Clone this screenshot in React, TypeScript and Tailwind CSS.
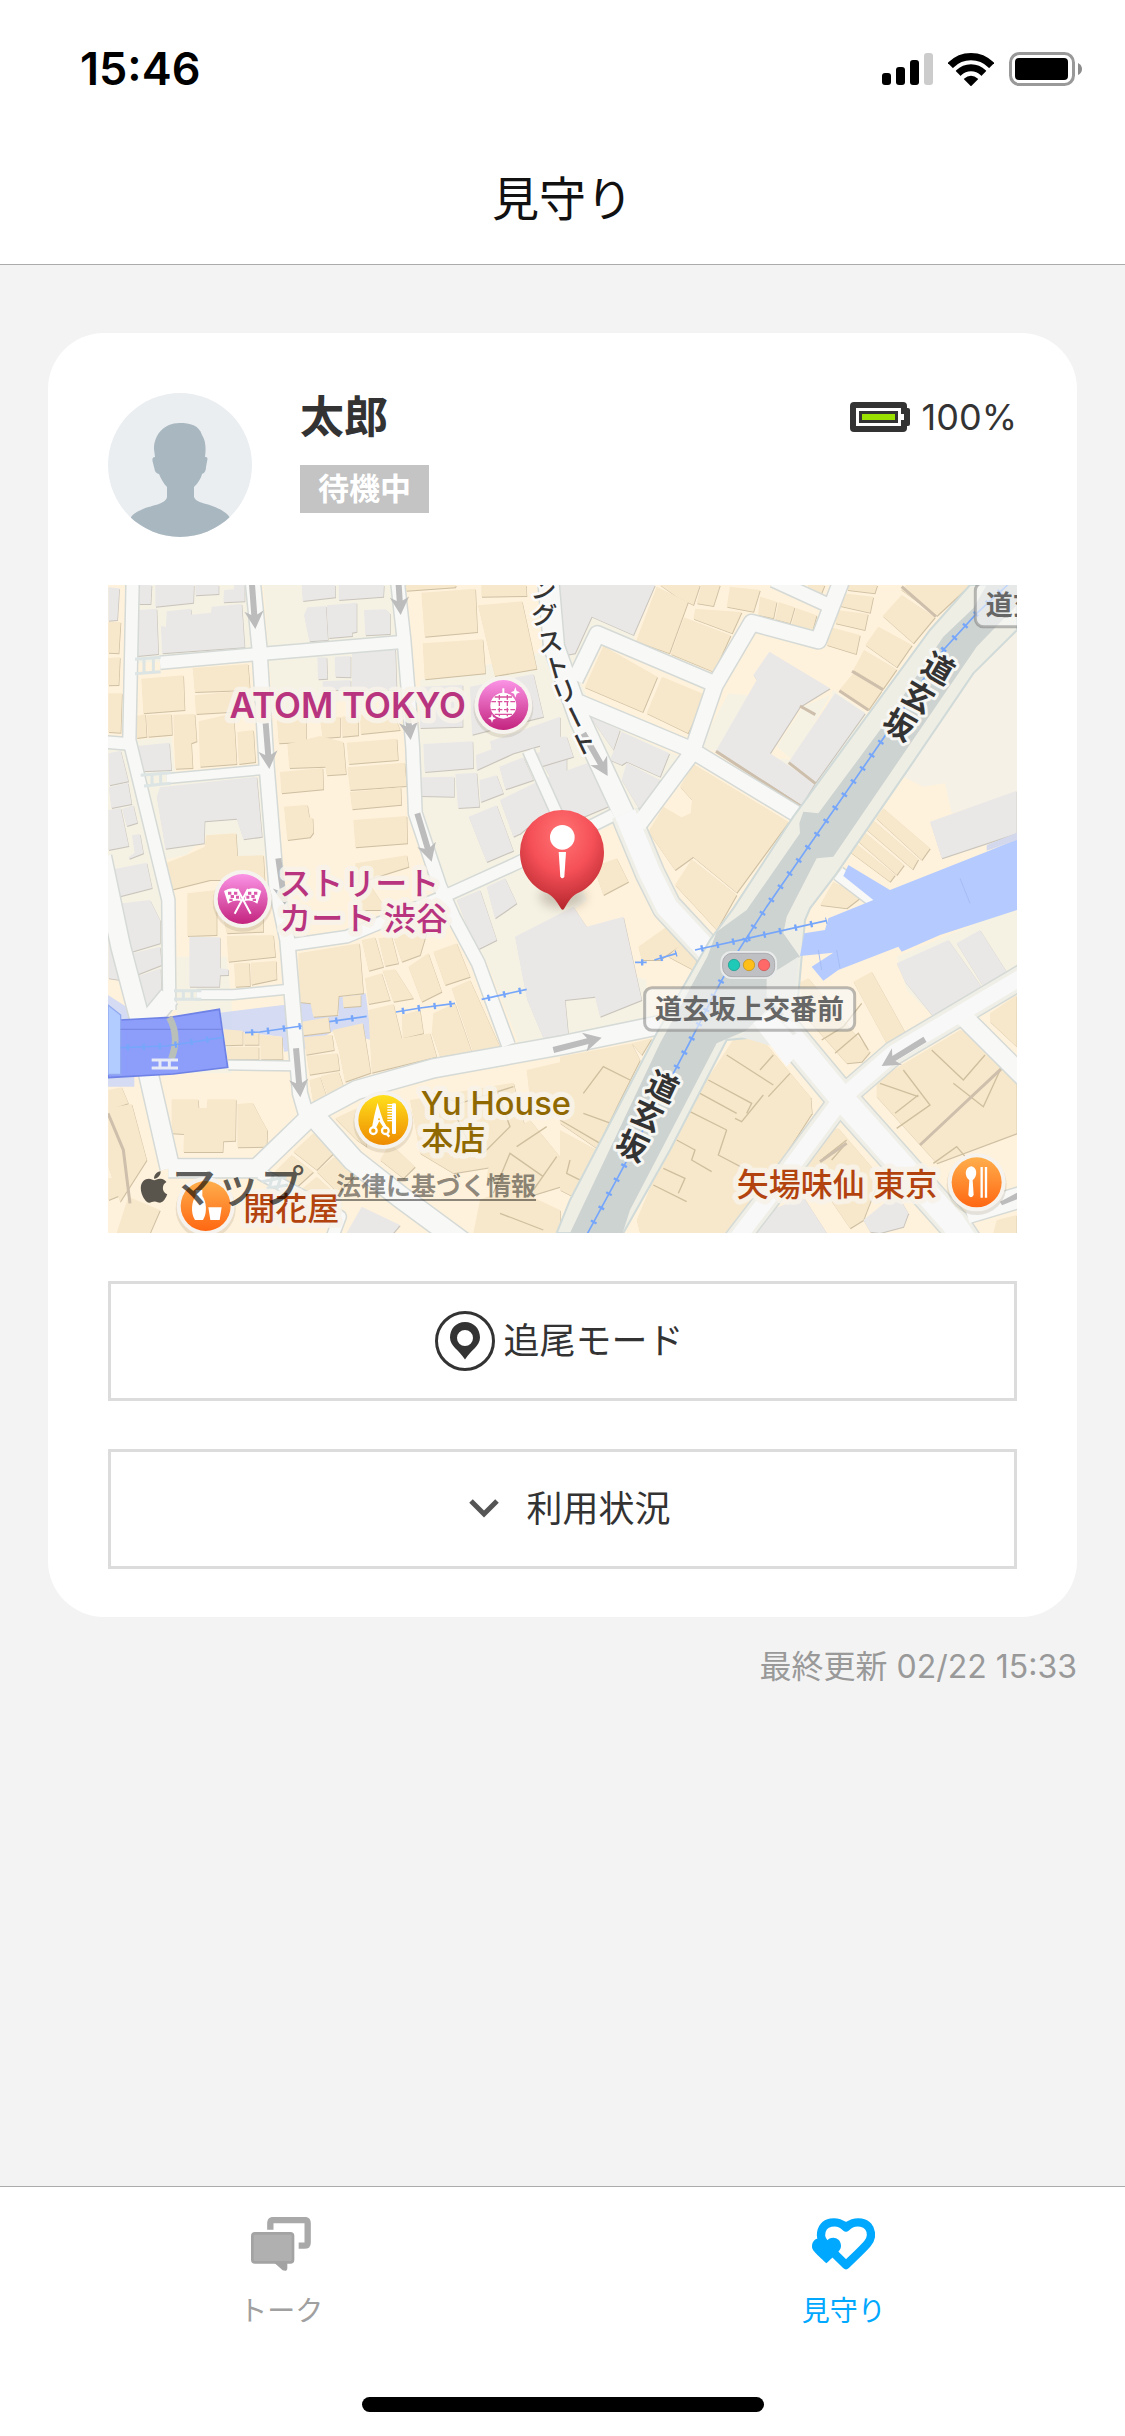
import { useState } from "react";
import { FaApple } from "react-icons/fa";

/* ---------- Map data: polygons are grouped by map tile ---------- */

type Tile = { x: number; y: number; tan: string[]; gray: string[] };

const tiles: Tile[] = [
  {
    x: 0,
    y: 0,
    gray: [
      "25,22 58,25 52,120 25,122",
      "118,15 155,15 152,72 116,72",
      "166,15 282,15 280,68 166,80",
      "286,15 356,15 356,42 286,46",
      "372,30 402,28 402,15 434,15 434,64 370,67",
      "116,90 170,86 175,222 112,228",
      "183,138 198,140 200,94 272,86 275,104 333,98 335,80 425,72 434,202 186,220",
      "605,15 706,15 706,52 608,63",
      "716,15 852,15 850,50 716,60",
      "612,105 622,82 678,78 684,180 628,184",
      "680,76 770,68 770,155 756,158 757,168 686,174",
      "792,90 856,88 870,100 870,162 796,166",
      "652,232 680,232 682,296 654,298",
      "704,230 752,228 752,292 706,290",
      "756,220 886,206 890,330 756,330",
      "668,304 752,300 752,330 668,330",
      "964,320 1088,314 1088,440 960,444",
      "1110,320 1300,282 1330,410 1116,464",
      "970,492 1118,484 1120,564 974,576",
      "1170,484 1380,410 1380,480 1240,520 1130,570 1128,525 1175,508",
      "966,592 1062,590 1062,650 962,648",
      "1066,582 1130,578 1138,680 1074,684",
      "1138,600 1190,586 1210,640 1142,666",
      "1198,560 1270,532 1300,600 1216,628",
      "1106,710 1190,676 1240,812 1160,846",
      "1200,660 1310,606 1345,690 1262,760 1240,770",
      "1310,520 1400,480 1400,585 1350,590",
      "110,498 208,488 214,570 126,574",
      "170,650 180,622 470,590 486,770 430,778 410,716 314,724 312,790 196,806",
      "25,520 62,512 85,604 28,616",
      "26,622 84,608 95,672 34,684",
      "66,686 100,676 112,728 80,738",
      "25,690 62,684 86,798 25,810",
      "85,832 104,818 96,766 120,762 130,820 88,836",
      "40,868 140,848 156,924 54,950",
      "1070,960 1140,930 1190,1080 1130,1110",
      "1160,920 1215,895 1250,970 1185,1015",
    ],
    tan: [
      "25,126 62,126 56,220 25,218",
      "25,234 60,232 56,315 25,316",
      "25,340 66,340 62,458 25,456",
      "124,296 250,286 254,390 130,400",
      "278,264 444,252 450,330 284,336",
      "284,346 450,330 452,392 288,402",
      "110,408 136,402 140,470 110,474",
      "140,406 214,402 216,464 144,470",
      "220,404 284,402 290,484 274,490 278,564 226,566 222,480",
      "296,424 400,400 404,452 410,552 300,560",
      "412,456 460,450 466,546 416,552",
      "918,15 1068,15 1066,22 918,32",
      "964,38 1126,26 1132,156 974,170",
      "968,190 1148,178 1156,280 974,298",
      "1144,15 1278,15 1280,48 1144,50",
      "1134,76 1266,64 1310,266 1184,288",
      "530,410 618,400 618,486 536,490",
      "660,420 720,410 720,470 668,474",
      "724,410 775,405 775,466 726,470",
      "780,405 880,395 900,450 782,462",
      "562,492 660,468 730,486 738,582 680,586 676,560 568,564",
      "740,488 890,476 894,540 746,552",
      "540,576 668,564 670,628 544,640",
      "742,562 914,548 920,618 750,630",
      "750,636 902,622 904,674 756,688",
      "552,680 622,674 628,712 638,714 640,758 630,772 562,780",
      "760,720 920,708 922,790 766,802",
      "766,850 920,826 926,860 800,900 860,990 766,990",
      "196,850 262,824 314,800 318,766 408,760 412,828 490,826 494,900 330,900 210,930",
    ],
  },
  {
    x: 1380,
    y: 0,
    gray: [
      "0,15 285,15 220,165 95,110 45,220 0,228",
      "628,215 810,325 720,380 630,520 765,610 725,675 468,512 590,300 580,285",
      "825,340 915,400 765,610 685,548",
      "90,410 180,450 160,510",
      "185,455 328,520 300,590 200,545 185,555 150,540",
      "200,548 300,600 245,700 185,600",
      "-60,470 20,470 40,530 -60,560",
      "-60,600 85,548 155,675 0,740 -60,740",
      "1110,725 1370,632 1370,760 1145,835",
    ],
    tan: [
      "290,20 384,66 328,220 228,184",
      "300,15 420,15 400,75 350,50",
      "424,15 480,15 460,78 410,70",
      "510,20 600,30 580,95 500,80",
      "600,50 650,65 640,115 594,105",
      "656,66 704,82 690,130 645,118",
      "708,84 770,106 755,160 694,136",
      "744,15 794,15 780,50 744,40",
      "406,86 545,96 516,160 400,116",
      "372,112 512,166 462,276 332,222",
      "130,198 292,290 248,396 74,322",
      "306,290 438,345 384,460 260,400",
      "862,15 952,15 944,40 862,30",
      "850,40 940,50 930,98 840,78",
      "830,90 924,102 914,150 826,130",
      "806,140 900,165 888,222 800,195",
      "955,140 1056,195 1010,262 916,195",
      "912,210 1010,268 970,325 880,270",
      "880,280 965,332 925,390 838,330",
      "1025,45 1125,112 1060,190 968,108",
      "1040,15 1230,15 1130,108 1022,28",
      "400,552 686,726 530,938 392,825 300,740 392,700 396,660 360,620",
      "310,680 545,818 495,905 400,830 345,870 265,755",
      "395,838 530,944 470,1050 410,985 345,915",
      "100,860 170,835 205,905 130,945",
      "970,685 1110,805 1085,840 948,715",
      "942,722 1075,838 1058,868 918,748",
      "912,755 1032,855 1010,885 890,780",
      "885,788 1005,885 990,905 865,812",
      "820,905 905,950 860,985 780,975",
    ],
  },
  {
    x: 0,
    y: 960,
    gray: [
      "66,10 150,0 180,60 180,130 95,155",
      "97,160 180,140 185,195 108,225",
      "108,230 182,205 185,310 140,322",
      "268,110 360,112 360,205 385,208 385,225 360,226 358,260 268,260",
      "25,80 60,240 25,235",
      "1245,110 1420,20 1460,80 1570,50 1625,300 1500,350 1485,290 1395,300 1405,405 1330,415 1280,295",
      "785,920 900,975 880,999 740,999",
    ],
    tan: [
      "262,-20 350,-30 350,105 262,108",
      "360,10 490,15 490,95 380,100",
      "380,108 520,105 526,170 385,185",
      "402,190 448,188 450,258 406,260",
      "452,188 528,182 530,238 454,254",
      "595,160 778,130 790,280 716,288 712,345 640,350 632,310 596,306",
      "728,290 782,284 782,318 730,322",
      "785,120 825,112 850,200 806,212",
      "835,115 875,110 895,190 855,198",
      "880,110 985,80 960,165 905,185",
      "795,235 845,220 870,300 805,312",
      "848,212 885,208 940,295 880,305",
      "925,200 985,160 1025,275 965,305",
      "1000,155 1070,130 1110,230 1035,255",
      "1055,265 1110,240 1200,440 1120,458",
      "1000,340 1065,310 1115,455 1020,470 995,400",
      "805,330 880,312 905,415 990,400 1010,470 815,518",
      "905,345 960,330 970,400 908,415",
      "372,388 428,392 428,434 374,436",
      "432,400 476,398 476,434 432,434",
      "380,440 476,440 476,478 382,478",
      "480,404 546,410 548,478 482,478",
      "606,365 685,352 690,396 610,406",
      "612,412 696,404 702,450 618,464",
      "620,468 712,460 718,510 628,524",
      "698,390 788,370 812,518 735,545 716,450",
      "628,540 660,530 680,590 640,612",
      "662,528 716,515 732,565 685,592",
      "215,598 294,598 296,624 320,624 322,598 408,598 406,722 370,724 368,756 250,756 252,702 215,700",
      "412,612 458,608 482,655 502,690 500,740 412,742",
      "640,700 705,755 650,810 580,755",
      "710,765 770,820 715,880 650,815",
      "575,765 640,815 580,870 520,820",
      "650,830 710,885 680,945 590,880",
      "25,570 65,562 85,610 25,630",
      "25,625 95,612 140,780 60,905 25,800",
      "25,835 60,830 75,880 25,900",
      "85,890 180,930 150,999 50,999",
      "705,655 780,620 800,740 770,720",
      "930,600 1240,548 1275,680 1180,800 1060,820 960,760",
      "1180,730 1290,660 1380,770 1380,860 1250,900 1160,830",
      "1280,510 1385,485 1385,650 1290,600",
      "1140,900 1230,860 1380,930 1380,999 1120,999",
      "870,730 945,800 910,835 840,780",
    ],
  },
  {
    x: 1380,
    y: 960,
    gray: [
      "1010,190 1165,120 1265,260 1120,350 1035,245",
      "1190,130 1260,90 1340,215 1270,260",
      "610,940 730,890 800,999 560,999",
      "910,960 1010,880 1045,940 1030,980 960,999 930,995",
    ],
    tan: [
      "235,140 320,80 370,130 300,180 245,180",
      "375,118 418,160 400,210 325,170",
      "215,430 275,415 245,465",
      "0,470 215,430 240,480 175,610 110,745 0,670",
      "0,690 120,755 40,890 0,870",
      "520,418 605,416 752,592 756,640 620,850 500,999 240,999 230,960 330,720 440,540",
      "880,245 935,215 1040,405 985,440",
      "715,250 745,235 930,455 905,485 860,490 745,360",
      "950,540 1200,390 1240,400 1370,540 1370,700 1130,790 950,590",
      "1290,340 1370,285 1370,440 1290,365",
      "800,690 835,685 960,830 910,960 870,985 730,780",
      "1310,960 1370,945 1370,999 1300,999",
    ],
  },
];

// Party walls and roof edges inside the larger blocks.
const walls = [
  "M1880 1425 L2020 1515 M1825 1500 L1955 1570 L1940 1600 M1800 1540 L1910 1600 M1770 1595 L1880 1650",
  "M2020 1425 L1980 1470 M2070 1480 L2005 1550 M1990 1545 L1925 1625 L1905 1615 M1880 1650 L1855 1725 L1960 1780",
  "M1730 1680 L1785 1710 L1775 1740 L1835 1775 M1690 1765 L1755 1795 L1735 1840 M1660 1815 L1760 1865",
  "M2410 1470 L2490 1575 L2390 1645 M2495 1410 L2590 1500 L2655 1425 M2340 1510 L2455 1550 M2385 1600 L2455 1545",
  "M2500 1750 L2570 1700 L2600 1735 M2560 1510 L2650 1580 L2705 1460",
  "M2165 1380 L2230 1340 L2285 1270 M2205 1420 L2275 1360 L2305 1410",
  "M1380 1620 L1500 1690 M1450 1600 L1560 1640 M1410 1740 L1400 1780 L1460 1810 M1450 1540 L1510 1460 L1590 1500",
  "M1000 1540 L1080 1570 L1240 1520 M1060 1590 L1120 1720 M1190 1530 L1230 1640 L1150 1720",
  "M1180 1840 L1230 1720 L1330 1790 M1250 1700 L1340 1640 M1300 1830 L1370 1730 M1200 1900 L1330 1950",
  "M2195 1740 L2230 1700 M2170 1735 L2240 1680 M2270 1780 L2170 1850",
];

const roads: { d: string; w: number }[] = [
  { d: "M98 0 L88 480 L205 960 L208 1290", w: 36 },
  { d: "M0 485 L90 492", w: 34 },
  { d: "M5 830 L62 1100 L120 1320 L145 1480 L210 1765", w: 56 },
  { d: "M208 1250 L150 1320", w: 60 },
  { d: "M205 1765 L470 1765 L630 1610", w: 54 },
  { d: "M480 1780 L720 1910 L690 1990", w: 34 },
  { d: "M458 0 L478 200 L500 560 L530 930 L562 1080 L580 1300 L600 1540 L620 1610", w: 42 },
  { d: "M635 1600 L760 1740 L900 1850 L1090 1990", w: 62 },
  { d: "M892 0 L912 180 L938 500 L946 700 L1020 920 L1060 1010 L1135 1150 L1225 1395", w: 38 },
  { d: "M180 248 L480 222 L905 186", w: 36 },
  { d: "M200 596 L500 568", w: 26 },
  { d: "M290 1244 L400 1244 L560 1228", w: 26 },
  { d: "M560 1096 L740 1070 L1030 950 L1250 850 L1540 705", w: 34 },
  { d: "M385 1455 L590 1458", w: 26 },
  { d: "M630 1605 L770 1530 L1000 1465 L1390 1395 L1680 1335", w: 54 },
  { d: "M1285 512 L1370 700", w: 32 },
  { d: "M1345 0 L1362 200 L1440 420 L1580 720", w: 60 },
  { d: "M1575 700 L1650 880 L1700 980 L1830 1120", w: 84 },
  { d: "M1425 300 L1492 162 L1845 312", w: 46 },
  { d: "M1430 365 L1765 505 L2095 705", w: 46 },
  { d: "M1615 735 L1775 520 L1845 315 L1955 128 L2155 182 L2225 0", w: 46 },
  { d: "M2020 0 L2190 78", w: 40 },
  { d: "M2215 880 L2320 960", w: 40 },
  { d: "M1980 1260 L2230 1560 L2560 1930 L2600 1990", w: 92 },
  { d: "M2800 1170 L2380 1420 L2230 1550 L2000 1860 L1900 1990", w: 68 },
  { d: "M2590 1310 L2800 1520", w: 54 },
  { d: "M2600 1900 L2800 1840", w: 60 },
];

const arrows: [number, number, number, number][] = [
  [455, 0, 466, 147],
  [895, 0, 902, 105],
  [497, 430, 508, 567],
  [920, 380, 932, 480],
  [952, 700, 995, 845],
  [535, 835, 555, 975],
  [588, 1405, 601, 1552],
  [1450, 460, 1523, 588],
  [1360, 1410, 1505, 1373],
  [2475, 1378, 2345, 1458],
];

const railways = [
  "M2750 -10 L2630 100 L2530 210 L2340 490 L2000 980 L1910 1120 L1860 1210 L1765 1395 L1720 1480 L1560 1780 L1460 1965",
  "M62 1403 L200 1398 L368 1372",
  "M435 1358 L480 1356 L605 1338",
  "M688 1325 L800 1309",
  "M888 1296 L960 1284 L1065 1270",
  "M1145 1258 L1280 1228",
  "M1605 1147 L1640 1147 M1663 1140 L1730 1120",
  "M1785 1110 L1930 1078 L2180 1022",
];

const slopeChars: [string, number, number, number][] = [
  ["道", 2515, 265, 30],
  ["玄", 2455, 350, 30],
  ["坂", 2398, 435, 30],
  ["道", 1688, 1520, 25],
  ["玄", 1642, 1606, 25],
  ["坂", 1596, 1698, 25],
];

const streetChars: [string, number, number, number][] = [
  ["ン", 1330, 28, 5],
  ["グ", 1332, 105, 5],
  ["ス", 1350, 185, -8],
  ["ト", 1370, 262, -16],
  ["リ", 1394, 335, -22],
  ["ー", 1423, 412, 64],
  ["ト", 1450, 490, -26],
];

function Arrow({ from }: { from: [number, number, number, number] }) {
  const [x1, y1, x2, y2] = from;
  const len = Math.hypot(x2 - x1, y2 - y1);
  const angle = (Math.atan2(y2 - y1, x2 - x1) * 180) / Math.PI;
  return (
    <path
      transform={`translate(${x1} ${y1}) rotate(${angle})`}
      d={`M0 -9 H${len - 43} L${len - 54} -29 L${len} 0 L${len - 54} 29 L${len - 43} 9 H0 Z`}
    />
  );
}

function Poi({ x, y, fill, children }: { x: number; y: number; fill: string; children: React.ReactNode }) {
  return (
    <g transform={`translate(${x} ${y})`}>
      <circle cy="8" r="90" fill="#8a7a60" opacity=".18" />
      <circle r="87" fill="#f6f3ee" />
      <circle r="75" fill={fill} />
      {children}
    </g>
  );
}

function MapDrawing() {
  return (
    <svg viewBox="24 15 2727 1944" className="block h-auto w-full" role="img" aria-label="渋谷 道玄坂周辺の地図">
      <defs>
        <linearGradient id="pink" x1="0" y1="0" x2="0" y2="1">
          <stop offset="0" stopColor="#fb94e6" />
          <stop offset="1" stopColor="#c3237e" />
        </linearGradient>
        <linearGradient id="yellow" x1="0" y1="0" x2="0" y2="1">
          <stop offset="0" stopColor="#ffe01c" />
          <stop offset="1" stopColor="#ee8a00" />
        </linearGradient>
        <linearGradient id="orange" x1="0" y1="0" x2="0" y2="1">
          <stop offset="0" stopColor="#ffae4c" />
          <stop offset="1" stopColor="#ff6712" />
        </linearGradient>
        <radialGradient id="pin" cx=".5" cy=".25" r=".75">
          <stop offset="0" stopColor="#ff7474" />
          <stop offset=".5" stopColor="#f55058" />
          <stop offset="1" stopColor="#b5262d" />
        </radialGradient>
        <filter id="soft" x="-50%" y="-50%" width="200%" height="200%">
          <feGaussianBlur stdDeviation="16" />
        </filter>
      </defs>

      <rect x="24" y="15" width="2727" height="1944" fill="#fff2dc" />
      <g fill="#f5f2e4">
        <path d="M98 15 H440 L470 225 L110 250 Z M490 15 H890 L915 330 L520 400 Z M110 480 L215 470 L225 575 L480 590 L495 830 L410 830 L408 760 L318 766 L260 824 L190 840 Z" />
        <path d="M24 490 L90 500 L220 1000 L215 1300 L140 1330 L24 900 Z M960 300 L1400 200 L1600 700 L1300 860 L1040 920 L950 690 Z M1150 1120 L1270 1080 L1640 1200 L1640 1320 L1260 1400 Z M1050 950 L1250 860 L1420 850 L1460 960 L1280 1100 L1140 1150 Z" />
        <path d="M230 1130 H380 L395 1260 V1480 L230 1480 Z M1380 15 H1665 L1600 180 L1480 140 L1400 300 Z M1450 400 L1740 530 L1620 720 L1560 660 Z M1885 340 L1980 350 L1850 515 L1800 500 Z" />
        <path d="M2030 500 L2110 380 L2200 340 L2090 550 Z M1880 520 L2110 680 L2300 400 L2200 330 L2080 540 Z" />
        <path d="M2390 1130 L2700 1000 L2751 990 V1170 L2500 1310 L2420 1230 Z" />
      </g>
      <path d="M2751 140 L2620 280 L2410 590 L2470 620 L2535 610 L2555 700 L2751 640 Z" fill="#f5f1e6" />
      <path
        d="M24 1245 L103 1296 V1520 H24 Z M360 1298 L632 1265 L640 1308 L716 1305 L712 1252 L797 1240 L815 1380 L700 1352 L610 1410 L552 1415 L545 1370 L370 1350 Z"
        fill="#cdd7f6"
        opacity=".85"
      />

      {tiles.map((t) => (
        <g key={`${t.x}-${t.y}`} transform={`translate(${t.x} ${t.y})`}>
          <g transform="translate(2 3)">
            {t.tan.map((p) => (
              <polygon key={p} points={p} fill="#cfc0a3" />
            ))}
            {t.gray.map((p) => (
              <polygon key={p} points={p} fill="#c9c5bd" />
            ))}
          </g>
          {t.tan.map((p) => (
            <polygon key={p} points={p} fill="#f7e8cb" />
          ))}
          {t.gray.map((p) => (
            <polygon key={p} points={p} fill="#eae8e7" />
          ))}
        </g>
      ))}
      <g fill="none" stroke="#cfbf9f" strokeWidth="4">
        {walls.map((d) => (
          <path key={d} d={d} />
        ))}
      </g>
      <path
        d="M2460 1695 L2705 1465 M1848 514 L2104 680 M2066 548 L2146 610 M2100 378 L2146 404 M2218 332 L2305 390 M2256 274 L2350 330 M2405 20 L2508 110 M24 1600 L70 1710 L90 1870 M2160 1745 L2240 1690"
        fill="none"
        stroke="#cdbfab"
        strokeWidth="9"
      />

      <g fill="none" strokeLinejoin="round">
        {roads.map((r) => (
          <path key={r.d} d={r.d} stroke="#d5dad6" strokeWidth={r.w + 9} />
        ))}
        {roads.map((r) => (
          <path key={r.d} d={r.d} stroke={r.w > 66 ? "#efefe7" : "#f8f8f7"} strokeWidth={r.w} />
        ))}
        {roads
          .filter((r) => r.w > 66)
          .map((r) => (
            <path key={r.d} d={r.d} stroke="#f8f8f8" strokeWidth={r.w - 20} />
          ))}
      </g>

      {/* Pedestrian crossings */}
      <g stroke="#dce4e4" strokeWidth="9" fill="none">
        <path d="M105 238 L182 232 M105 281 L182 275 M132 238 V278 M160 236 V276" />
        <path d="M122 586 L212 578 M132 618 L212 610 M156 584 V614 M182 582 V612" />
        <path d="M222 1232 H304 M222 1258 H304 M250 1232 V1258 M276 1232 V1258" />
        <path d="M485 1805 L560 1790 M500 1825 L565 1815 M520 1785 L505 1830 M545 1785 L530 1830" />
      </g>

      {/* Dogenzaka: side walks, carriageway and crossing */}
      <path
        d="M2610 15 L2490 150 L2080 710 L1900 985 L1830 1080 L1670 1360 L1410 1860 L1370 1959 H1570 L1710 1710 L1880 1380 L1985 1370 L2090 1300 L2115 1020 L2130 985 L2210 880 L2430 560 L2620 280 L2751 150 V15 Z"
        fill="#eeeee5"
        stroke="#d0dad8"
        strokeWidth="6"
      />
      <path
        d="M2660 15 L2620 85 L2530 170 L2340 450 L2155 700 L2110 695 L2098 730 L2100 760 L1940 990 L1850 1055 L1822 1130 L1680 1390 L1410 1959 H1568 L1590 1890 L1710 1660 L1850 1390 L1990 1330 L2085 1290 L2005 1190 L2100 1130 L2050 1060 L2060 1010 L2150 835 L2200 830 L2630 200 L2751 75 V15 Z"
        fill="#cdd3d1"
      />
      <path d="M2000 1190 L2095 1130 L2080 1330 L2000 1250 Z M1920 1370 L2000 1290 L2090 1360 L2020 1400 Z" fill="#ebece7" />
      <path d="M1960 1330 L2010 1290 L2110 1400 L2060 1460 Z" fill="#f8f8f8" />

      {/* Water and railway station */}
      <path
        d="M2245 855 L2370 930 L2660 815 L2751 778 V990 L2520 1065 L2405 1115 L2395 1100 L2215 1170 L2170 1202 L2135 1160 L2200 1118 L2100 1128 L2113 1060 L2175 1050 L2185 1015 L2320 960 L2230 888 Z"
        fill="#b5cbff"
      />
      <path d="M2660 795 L2751 758 V780 L2660 812 Z" fill="#d3d8ec" />
      <path d="M2580 895 L2610 970 M2155 1110 L2165 1170 M2210 1110 L2220 1165" stroke="#a5bcf5" strokeWidth="3" fill="none" />
      <path d="M60 1320 L210 1312 L358 1288 L383 1462 L220 1482 L24 1493 V1320 Z" fill="#8d9dfa" stroke="#6f82e6" strokeWidth="5" />
      <path d="M24 1275 L62 1305 V1483 H24 Z" fill="#b3ccff" stroke="#91a9f0" strokeWidth="4" />
      <path d="M62 1348 H365" stroke="#7888e4" strokeWidth="4" />
      <path d="M208 1312 Q240 1370 214 1436" stroke="#b9c0ba" strokeWidth="20" fill="none" />
      <path d="M155 1440 H234 M155 1464 H234 M180 1440 V1464 M208 1440 V1464" stroke="#e5eaf6" strokeWidth="9" />

      <g fill="none" stroke="#76a6fa">
        {railways.map((d) => (
          <g key={d}>
            <path d={d} strokeWidth="5" />
            <path d={d} strokeWidth="19" strokeDasharray="7 41" strokeDashoffset="-18" />
          </g>
        ))}
      </g>

      <g fill="#bcbcbc">
        {arrows.map((a) => (
          <Arrow key={a.join()} from={a} />
        ))}
        <path d="M2700 1865 L2751 1838 V1858 L2706 1876 Z" />
      </g>

      {/* Street names */}
      <g
        className="font-medium"
        fontSize="76"
        fill="#333"
        stroke="#fafafa"
        strokeWidth="16"
        strokeLinejoin="round"
        paintOrder="stroke"
        textAnchor="middle"
      >
        {streetChars.map(([c, x, y, r]) => (
          <text key={y} transform={`translate(${x} ${y}) rotate(${r})`} y="28">
            {c}
          </text>
        ))}
      </g>
      <g
        className="font-bold"
        fontSize="93"
        fill="#333"
        stroke="#f6f6f3"
        strokeWidth="18"
        strokeLinejoin="round"
        paintOrder="stroke"
        textAnchor="middle"
      >
        {slopeChars.map(([c, x, y, r]) => (
          <text key={`${x}`} transform={`translate(${x} ${y}) rotate(${r})`} y="34">
            {c}
          </text>
        ))}
      </g>

      {/* Intersection signs */}
      <g fill="#f8f8f8" fillOpacity=".6" stroke="#777" strokeOpacity=".5" strokeWidth="9">
        <rect x="1634" y="1223" width="630" height="128" rx="22" />
        <rect x="2626" y="8" width="400" height="132" rx="24" />
      </g>
      <g className="font-bold" fontSize="81" fill="#666">
        <text x="1665" y="1316">道玄坂上交番前</text>
        <text x="2657" y="105">道玄坂上</text>
      </g>
      <rect x="1861" y="1113" width="170" height="84" rx="34" fill="#e9ebeb" />
      <rect x="1868" y="1120" width="156" height="70" rx="28" fill="#bfc0c4" stroke="#acadb0" strokeWidth="3" />
      <circle cx="1902" cy="1155" r="17" fill="#1ec9b7" stroke="#13978a" strokeWidth="2" />
      <circle cx="1947" cy="1155" r="17" fill="#ffbf1a" stroke="#c18d0c" strokeWidth="2" />
      <circle cx="1992" cy="1155" r="17" fill="#ff6a69" stroke="#cb4a4a" strokeWidth="2" />

      {/* Places */}
      <g
        stroke="#f7f3ea"
        strokeOpacity=".9"
        strokeWidth="32"
        strokeLinejoin="round"
        paintOrder="stroke"
        className="font-medium"
        fontSize="96"
      >
        <text x="1098" y="413" textAnchor="end" fill="#b8347f" fontSize="105" className="font-semibold">ATOM TOKYO</text>
        <text x="538" y="944" fill="#b8347f">ストリート</text>
        <text x="538" y="1050" fill="#b8347f">カート 渋谷</text>
        <text x="962" y="1605" fill="#906800" fontSize="98">Yu House</text>
        <text x="964" y="1709" fill="#906800">本店</text>
        <text x="1910" y="1848" fill="#b3430e">矢場味仙 東京</text>
        <text x="430" y="1919" fill="#b3430e">開花屋</text>
      </g>

      <Poi x={1210} y={375} fill="url(#pink)">
        <circle r="39" fill="#fff" cy="2" />
        <path d="M0 -50 V-30" stroke="#fff" strokeWidth="6" />
        <g stroke="#d9529f" strokeWidth="4" fill="none">
          <path d="M-36 -10 H36 M-36 14 H36 M-12 -30 V34 M12 -30 V34" strokeDasharray="14 5" />
          <path d="M-26 -24 H26 M-26 28 H26" />
        </g>
        <path d="M36 -54 L40 -42 L50 -38 L40 -34 L36 -22 L32 -34 L22 -38 L32 -42 Z M-34 26 L-31 36 L-22 40 L-31 44 L-34 54 L-37 44 L-46 40 L-37 36 Z" fill="#fff" />
      </Poi>
      <Poi x={428} y={957} fill="url(#pink)">
        <g fill="#fff">
          <path d="M-56 -24 Q-34 -38 -14 -28 L-4 6 Q-26 0 -44 14 Z M56 -24 Q34 -38 14 -28 L4 6 Q26 0 44 14 Z" />
          <path d="M-16 -30 L24 44 M16 -30 L-24 44" stroke="#fff" strokeWidth="6" />
        </g>
        <g fill="#dc58ac">
          <path d="M-44 -22 h10 v9 h-10z M-26 -22 h10 v9 h-10z M-36 -12 h10 v9 h-10z M-40 -1 h10 v7 h-10z M-20 -10 h9 v9 h-9z" />
          <path d="M34 -22 h10 v9 h-10z M16 -22 h10 v9 h-10z M26 -12 h10 v9 h-10z M30 -1 h10 v7 h-10z M11 -10 h9 v9 h-9z" />
        </g>
      </Poi>
      <Poi x={850} y={1620} fill="url(#yellow)">
        <path d="M-17 -52 C-12 -30 -4 -10 0 2 L14 26 L4 28 L-12 4 L-24 28 L-34 22 C-30 0 -24 -30 -17 -52 Z" fill="#fff" />
        <circle cx="-13" cy="-2" r="3" fill="#f5ad0b" />
        <g fill="none" stroke="#fff" strokeWidth="7">
          <circle cx="-30" cy="32" r="10" />
          <circle cx="6" cy="32" r="10" />
          <path d="M10 42 L18 50" />
        </g>
        <rect x="26" y="-50" width="12" height="92" rx="4" fill="#fff" />
        <path d="M12 -46 H28 M12 -38 H28 M12 -30 H28 M12 -22 H28 M12 -14 H28 M12 -6 H28 M12 2 H28" stroke="#fff" strokeWidth="4" />
      </Poi>
      <Poi x={2630} y={1807} fill="url(#orange)">
        <path d="M-16 -48 C-36 -46 -38 -18 -22 -6 L-25 38 Q-17 52 -9 38 L-12 -6 C4 -18 2 -46 -16 -48 Z" fill="#fff" />
        <path d="M15 -46 V46 M28 -46 V46" stroke="#fff" strokeWidth="7" />
      </Poi>
      <Poi x={317} y={1878} fill="url(#orange)">
        <path d="M-30 -48 H-10 V-30 C2 -14 6 20 -8 42 H-32 C-46 20 -42 -14 -30 -30 Z M8 4 H48 L42 42 H14 Z" fill="#fff" />
      </Poi>

      {/* Current position */}
      <ellipse cx="1388" cy="950" rx="70" ry="34" fill="#6b5a4a" opacity=".3" filter="url(#soft)" />
      <path
        d="M1386 690 A126 126 0 0 1 1512 816 C1512 880 1470 925 1432 940 C1412 950 1400 975 1392 987 Q1388 991 1384 987 C1376 975 1362 950 1342 940 C1300 925 1260 880 1260 816 A126 126 0 0 1 1386 690 Z"
        fill="url(#pin)"
      />
      <circle cx="1387" cy="772" r="37" fill="#fff" />
      <path d="M1376 816 H1398 L1393 890 Q1387 900 1381 890 Z" fill="#fff" />
    </svg>
  );
}

/* ---------- Icons ---------- */

function StatusIcons() {
  return (
    <div className="flex items-center gap-[15px]">
      <svg className="h-8 w-[51px]" viewBox="0 0 51 32" aria-hidden="true">
        <rect x="0" y="20" width="9" height="12" rx="3" />
        <rect x="14" y="14" width="9" height="18" rx="3" />
        <rect x="28" y="7" width="9" height="25" rx="3" />
        <rect x="42" y="0" width="9" height="32" rx="3" fill="#ccc" />
      </svg>
      <svg className="h-[33px] w-[46px]" viewBox="264 66 138 99" aria-hidden="true">
        <defs>
          <clipPath id="wedge">
            <path d="M333 166 L262 95 V60 H404 V95 Z" />
          </clipPath>
        </defs>
        <g clipPath="url(#wedge)">
          <circle cx="333" cy="162" r="85" fill="none" stroke="#000" strokeWidth="22" />
          <circle cx="333" cy="162" r="52" fill="none" stroke="#000" strokeWidth="21" />
          <circle cx="333" cy="162" r="28" />
        </g>
      </svg>
      <svg className="h-[34px] w-[73px]" viewBox="0 0 73 34" aria-hidden="true">
        <rect x="1.5" y="1.5" width="63" height="31" rx="9" fill="none" stroke="#999" strokeWidth="3" />
        <rect x="6" y="6" width="53" height="22" rx="4" />
        <path d="M69 11 Q73 13 73 17 Q73 21 69 23 Z" fill="#8c8c8c" />
      </svg>
    </div>
  );
}

function Avatar() {
  return (
    <svg className="size-36 shrink-0 rounded-full" viewBox="0 0 144 144" role="img" aria-label="太郎">
      <rect width="144" height="144" fill="#eaeef1" />
      <path
        d="M71.5 30 C56 30 46 42 46 56 L47 64 C44 64 44 67 45 70 L47 78 C48 80 50 81 51 81 C53 86 56 91 59 94 V104 C58 111 45 112 35 116 C28 119 23 122 22 127 V144 H123 V127 C121 121 114 117 107 114 C98 110 88 110 86 104 V94 C89 91 93 86 94 81 C97 80 98 77 98 74 L99.5 66 C99.5 64 98 64 97 64 C98 56 98 48 94 42 C91 32 82 30 71.5 30 Z"
        fill="#a9b7c0"
      />
    </svg>
  );
}

function BatteryIcon() {
  return (
    <svg className="h-[30px] w-[60px]" viewBox="0 0 60 30" role="img" aria-label="バッテリー">
      <rect width="57" height="30" rx="4" fill="#333" />
      <rect x="50" y="6" width="10" height="18" rx="2" fill="#333" />
      <path d="M6 6 H51 V12 H54 V18 H51 V24 H6 Z" fill="#fff" />
      <rect x="9" y="9" width="39" height="12" fill="#333" />
      <rect x="12" y="12" width="33" height="6" fill="#9be100" />
    </svg>
  );
}

function TalkIcon() {
  return (
    <svg className="h-[54px] w-[60px]" viewBox="63 51 180 162" aria-hidden="true">
      <path d="M121 89 V70 Q121 60 131 60 H223 Q233 60 233 70 V128 Q233 137 223 137 H206" fill="none" stroke="#a9a9a9" strokeWidth="19" />
      <path d="M130 186 L158 211 Q172 216 172 204 V186 Z" fill="#a3a3a3" />
      <rect x="67" y="100" width="122" height="87" rx="8" fill="#b0b0b0" stroke="#a3a3a3" strokeWidth="8" />
    </svg>
  );
}

function HeartIcon() {
  return (
    <svg className="h-[54px] w-[63px]" viewBox="99 51 189 162" aria-hidden="true">
      <path
        d="M201 83 C180 58 126 60 126 106 C126 122 136 132 201 195 C266 132 276 124 276 105 C276 60 222 58 201 83 Z"
        fill="none"
        stroke="#00a8ff"
        strokeWidth="25"
        strokeLinejoin="round"
      />
      <path d="M142 124 C130 108 99 112 99 139 C99 150 105 155 142 190 C178 156 186 150 186 137 C185 112 156 106 142 124 Z" fill="#00a8ff" />
    </svg>
  );
}

function TrackIcon() {
  return (
    <svg className="size-[60px]" viewBox="0 0 60 60" aria-hidden="true">
      <circle cx="30" cy="30" r="28.5" fill="none" stroke="#333" strokeWidth="3" />
      <path
        fillRule="evenodd"
        d="M30 11 C21 11 15 18 15 26.500 C15 35 24 39 30 48.500 C36 39 45 35 45 26.500 C45 18 39 11 30 11 Z M30 19 A8 8 0 1 1 30 35 A8 8 0 1 1 30 19 Z"
        fill="#333"
      />
    </svg>
  );
}

/* ---------- Page ---------- */

export default function App() {
  const [tab, setTab] = useState<"talk" | "watch">("watch");

  return (
    <div lang="ja" className="flex min-h-screen flex-col bg-white font-['Inter','Noto_Sans_CJK_JP',sans-serif] text-[#333]">
      <header className="border-b border-[#ababab] bg-white">
        <div className="flex h-33 items-center justify-between pt-1.5 pr-[43px] pl-20">
          <time className="text-[45px] font-semibold text-black">15:46</time>
          <StatusIcons />
        </div>
        <h1 className="flex h-33 items-center justify-center pt-0.5 text-[47px] text-[#111]">見守り</h1>
      </header>

      <main className="flex-1 bg-[#f3f3f3] px-12 pt-17">
        <section className="rounded-[56px] bg-white px-15 pt-15 pb-12">
          <div className="flex items-start">
            <Avatar />
            <div className="ml-12 flex flex-1 flex-col items-start gap-6">
              <h2 className="text-[44px] leading-12 font-bold">太郎</h2>
              <span className="bg-[#c4c4c4] px-[18px] text-[31px] leading-12 font-bold text-white">待機中</span>
            </div>
            <div className="flex h-12 items-center gap-3 text-4xl">
              <BatteryIcon />
              <span>100%</span>
            </div>
          </div>

          <div className="relative mt-12 overflow-hidden">
            <MapDrawing />
            <div className="absolute bottom-6 left-7 flex items-center gap-8">
              <span className="flex items-center text-[44px] leading-none font-medium text-black/65">
                <FaApple className="size-9" aria-hidden="true" />
                マップ
              </span>
              <a href="#legal" className="text-[25px] font-bold text-black/45 underline underline-offset-4">
                法律に基づく情報
              </a>
            </div>
          </div>

          <button
            type="button"
            className="mt-12 flex h-30 w-full items-center justify-center gap-2 border-3 border-[#dcdcdc] pr-1.5 text-4xl"
          >
            <TrackIcon />
            追尾モード
          </button>
          <button
            type="button"
            aria-expanded="false"
            className="mt-12 flex h-30 w-full items-center justify-center gap-3 border-3 border-[#dcdcdc] text-4xl"
          >
            <svg className="size-[60px]" viewBox="0 0 60 60" aria-hidden="true">
              <path d="M17 22 L30 35 L43 22" fill="none" stroke="#555" strokeWidth="5" />
            </svg>
            利用状況
          </button>
        </section>
        <p className="mt-[26px] text-right text-[32px] leading-12 text-[#999]">最終更新 02/22 15:33</p>
      </main>

      <footer className="border-t border-[#ababab] bg-white pb-6">
        <nav className="grid grid-cols-2 text-[28px] leading-10">
          <button
            type="button"
            aria-current={tab === "talk" ? "page" : undefined}
            onClick={() => setTab("talk")}
            className="flex flex-col items-center gap-5 pt-[30px] text-[#a0a0a0]"
          >
            <TalkIcon />
            トーク
          </button>
          <button
            type="button"
            aria-current={tab === "watch" ? "page" : undefined}
            onClick={() => setTab("watch")}
            className="flex flex-col items-center gap-5 pt-[30px] text-[#00a8ff]"
          >
            <HeartIcon />
            見守り
          </button>
        </nav>
        <div className="mx-auto mt-[66px] h-[15px] w-[402px] rounded-full bg-black" />
      </footer>
    </div>
  );
}
